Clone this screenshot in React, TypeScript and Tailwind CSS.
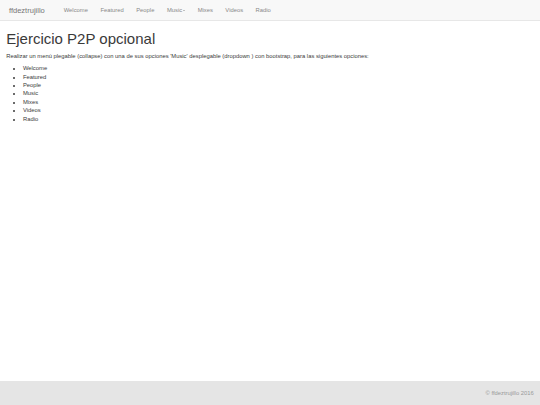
const navItems = ['Welcome', 'Featured', 'People', 'Music', 'Mixes', 'Videos', 'Radio'];

export default function App() {
  return (
    <div className="flex min-h-screen flex-col bg-white font-['Liberation_Sans',Arial,sans-serif] text-[#3a3a3a]">
      <nav className="flex h-[21px] items-center border-b border-[#e7e7e7] bg-[#f8f8f8]">
        <a className="pl-[9px] pr-[6.25px] text-[7.5px] leading-[21px] text-[#777]">ffdeztrujillo</a>
        <ul className="ml-[6.5px] flex">
          {navItems.map((item) => (
            <li key={item}>
              <a className="flex items-center px-[6.25px] text-[5.83px] leading-[21px] text-[#888]">
                {item}
                {item === 'Music' && (
                  <span className="ml-[1px] inline-block h-0 w-0 border-x-[1.7px] border-t-[1.7px] border-x-transparent border-t-[#888]" />
                )}
              </a>
            </li>
          ))}
        </ul>
      </nav>

      <main className="flex-1 px-[6.25px]">
        <h1 className="mt-[10.3px] mb-[3.8px] text-[15px] leading-[16.5px]">Ejercicio P2P opcional</h1>
        <p className="mb-[4.2px] text-[5.83px] leading-[8.33px]">
          Realizar un menú plegable (collapse) con una de sus opciones 'Music' desplegable (dropdown ) con bootstrap, para las siguientes opciones:
        </p>
        <ul className="list-disc pl-[16.7px] text-[5.83px] leading-[8.45px]">
          {navItems.map((item) => (
            <li key={item}>{item}</li>
          ))}
        </ul>
      </main>

      <footer className="flex h-[24px] items-center justify-end bg-[#e5e5e5] px-[6.25px]">
        <p className="text-[5.83px] text-[#999]">© ffdeztrujillo 2016</p>
      </footer>
    </div>
  );
}
